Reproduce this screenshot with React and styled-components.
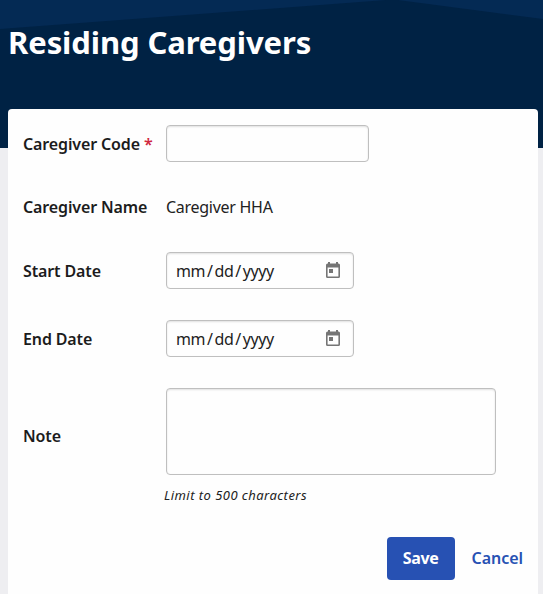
import React from 'react';
import styled, { createGlobalStyle } from 'styled-components';

const GlobalStyle = createGlobalStyle`
  *,
  *:before,
  *:after {
    box-sizing: border-box;
  }

  body {
    margin: 0;
    overflow: hidden;
    background-color: #eeeef1;
    color: #222;
    font-family: 'Noto Sans', sans-serif;
    font-size: 16px;
  }
`;
const StyledPage = styled.div`
  display: grid;
  grid-template-rows: 109px 485px;
  height: 594px;
  background: linear-gradient(#002244 148px, #eeeef1 148px);
`;
const StyledHeader = styled.header`
  display: grid;

  > * {
    grid-area: 1 / 1;
  }

  h1 {
    margin: 21px 0 0 8px;
    color: #fff;
    font-size: 31px;
    font-weight: 700;
    letter-spacing: -0.1px;
    line-height: 42px;
    white-space: nowrap;
  }
`;
const StyledForm = styled.form`
  display: flex;
  flex-direction: column;
  margin: 0 5px 0 8px;
  padding: 16px 15px 0;
  border-radius: 4px 4px 0 0;
  background-color: #fefefe;
`;
const StyledRow = styled.div`
  display: grid;
  grid-template-columns: 143px 1fr;
  align-items: center;
  height: ${({ $height }) => $height}px;
  margin-bottom: ${({ $gap }) => $gap}px;
`;
const StyledLabel = styled.label`
  color: #1c1c1c;
  font-weight: 600;
  letter-spacing: -0.13px;
  line-height: 22px;
  white-space: nowrap;

  span {
    color: #d0273d;
  }
`;
const StyledNoteLabel = styled(StyledLabel)`
  padding-top: 8px;
`;
const StyledValue = styled.span`
  letter-spacing: -0.28px;
  line-height: 22px;
`;
const StyledControl = styled.div`
  display: flex;
  align-items: center;
  width: ${({ $width }) => $width}px;
  height: 100%;
  padding: 0 12px 0 9px;
  border: 1px solid #bfbfbf;
  border-radius: 4px;
  background-color: #fefefe;
  box-shadow: inset 0 1px 2px rgba(0, 0, 0, 0.12);

  svg {
    margin-left: auto;
  }
`;
const StyledInput = styled(StyledControl)`
  display: block;
  outline: 0;
  font: inherit;
  resize: none;
`;
const StyledDate = styled.span`
  display: flex;
  gap: 2px;
  letter-spacing: -0.45px;
  line-height: 22px;
`;
const StyledHint = styled.p`
  margin: 0 0 0 141px;
  font-size: 13px;
  font-style: italic;
  letter-spacing: 0.46px;
  line-height: 17px;
`;
const StyledActions = styled.div`
  display: flex;
  justify-content: flex-end;
  gap: 17px;
  margin-top: 33px;
`;
const StyledButton = styled.button`
  width: ${({ $primary }) => ($primary ? '68px' : 'auto')};
  height: 43px;
  padding: 0 0 1px;
  border: 0;
  border-radius: 4px;
  background-color: ${({ $primary }) => ($primary ? '#2751b3' : 'transparent')};
  color: ${({ $primary }) => ($primary ? '#fff' : '#2751b3')};
  font: inherit;
  font-weight: ${({ $primary }) => ($primary ? 700 : 600)};
  letter-spacing: ${({ $primary }) => ($primary ? '-0.35px' : '-0.05px')};
  line-height: 22px;
`;

const Backdrop = () => (
  <svg width="543" height="30" viewBox="0 0 543 30" aria-hidden="true">
    <path d="M0 0H386L0 29Z" fill="#042a54" />
    <path d="M398 0H543V19Z" fill="#042a54" />
  </svg>
);

const CalendarIcon = () => (
  <svg width="16" height="18" viewBox="0 0 16 18" fill="#757575" aria-hidden="true">
    <path
      fillRule="evenodd"
      d="M3 0h2v1.500h6V0h2v1.500h.5A1.500 1.500 0 0 1 15 3v11.500a1.500 1.500 0 0 1-1.500 1.500h-11A1.500 1.500 0 0 1 1 14.500V3A1.500 1.500 0 0 1 2.500 1.500H3ZM2.600 5.500v8.900h10.800V5.500Z"
    />
    <path d="M4 7h4v4H4Z" />
  </svg>
);

const DateField = () => (
  <StyledControl $width={188}>
    <StyledDate>
      <span>mm</span>
      <span>/</span>
      <span>dd</span>
      <span>/</span>
      <span>yyyy</span>
    </StyledDate>
    <CalendarIcon />
  </StyledControl>
);

const App = () => (
  <>
    <GlobalStyle />
    <StyledPage>
      <StyledHeader>
        <Backdrop />
        <h1>Residing Caregivers</h1>
      </StyledHeader>

      <StyledForm onSubmit={e => e.preventDefault()}>
        <StyledRow $height={37} $gap={33}>
          <StyledLabel htmlFor="code">
            Caregiver Code <span>*</span>
          </StyledLabel>
          <StyledInput as="input" id="code" $width={203} />
        </StyledRow>
        <StyledRow $height={24} $gap={33}>
          <StyledLabel>Caregiver Name</StyledLabel>
          <StyledValue>Caregiver HHA</StyledValue>
        </StyledRow>
        <StyledRow $height={37} $gap={31}>
          <StyledLabel>Start Date</StyledLabel>
          <DateField />
        </StyledRow>
        <StyledRow $height={37} $gap={31}>
          <StyledLabel>End Date</StyledLabel>
          <DateField />
        </StyledRow>
        <StyledRow $height={87} $gap={12}>
          <StyledNoteLabel htmlFor="note">Note</StyledNoteLabel>
          <StyledInput as="textarea" id="note" $width={330} />
        </StyledRow>
        <StyledHint>Limit to 500 characters</StyledHint>

        <StyledActions>
          <StyledButton $primary type="submit">
            Save
          </StyledButton>
          <StyledButton type="button">Cancel</StyledButton>
        </StyledActions>
      </StyledForm>
    </StyledPage>
  </>
);

export default App;
